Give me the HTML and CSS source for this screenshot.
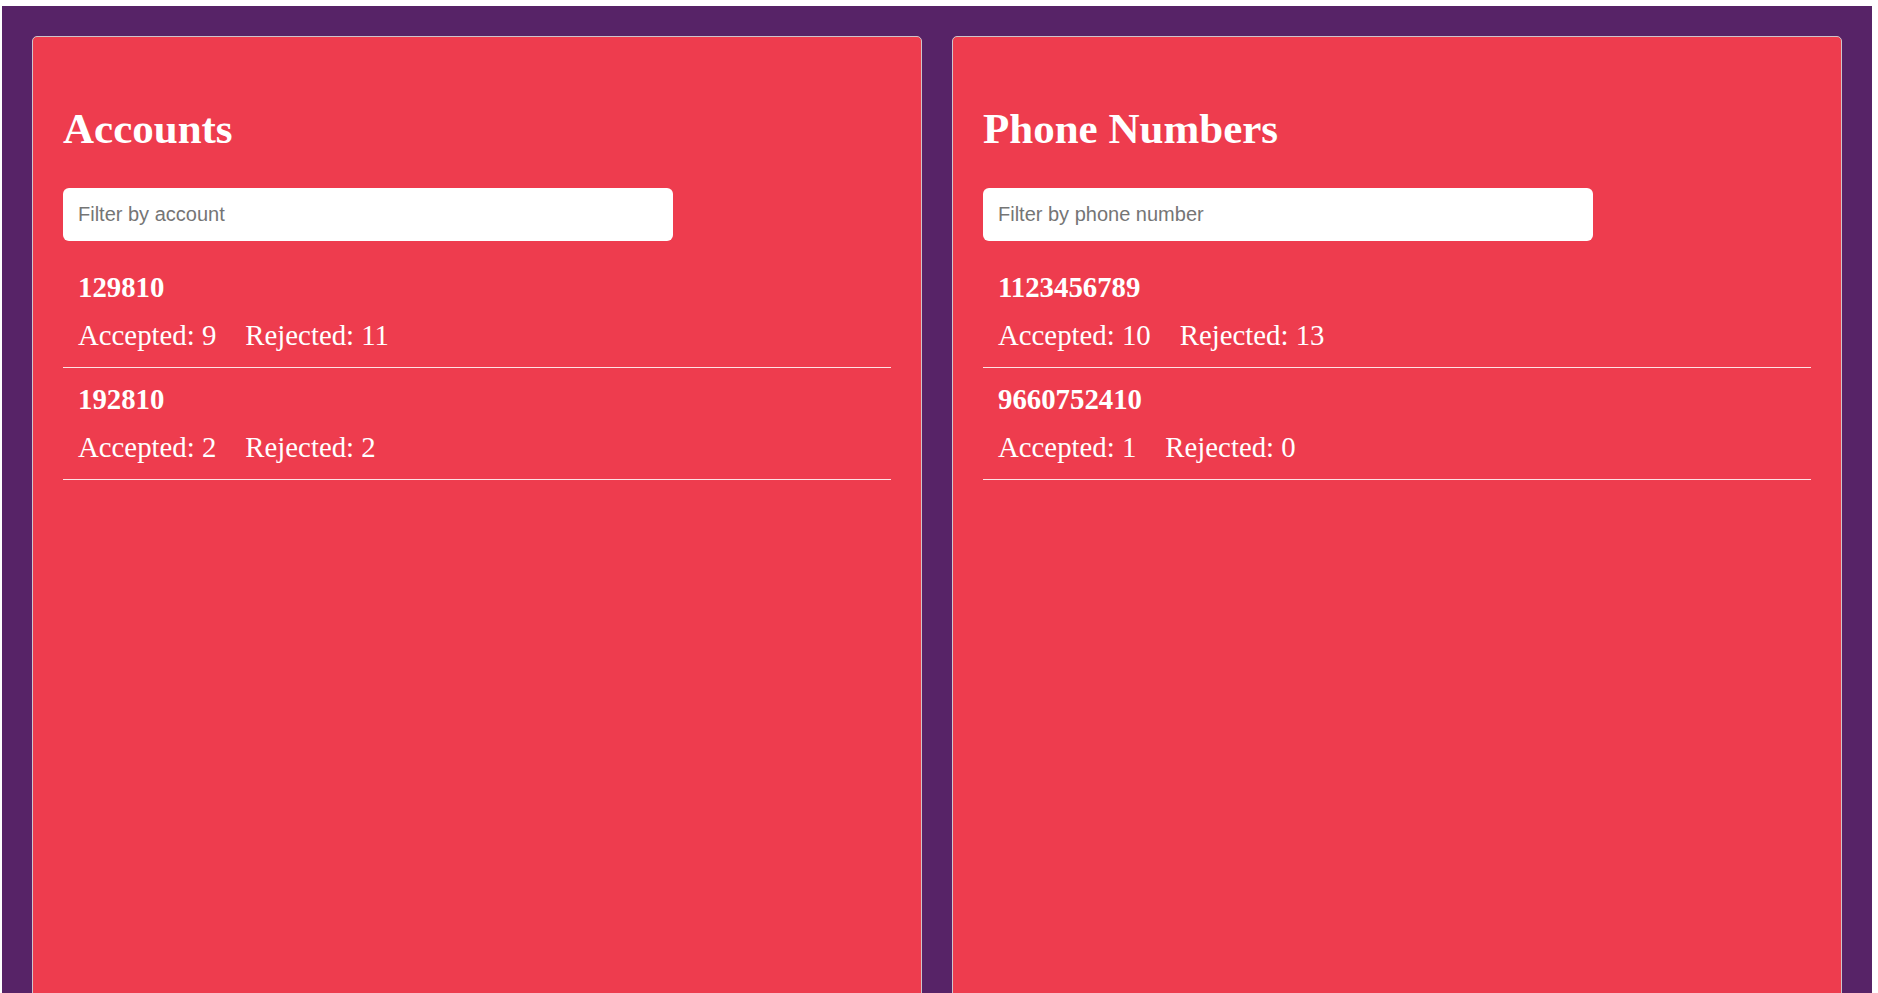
FILE: index.html
```html
<!DOCTYPE html>
<html lang="en">
<head>
<meta charset="utf-8">
<title>Accounts and Phone Numbers</title>
<link rel="stylesheet" href="styles.css">
</head>
<body>
<div class="page">
  <section class="card">
    <h1 class="card-title">Accounts</h1>
    <input class="filter" type="text" placeholder="Filter by account">
    <ul class="list">
      <li class="item">
        <div class="item-name">129810</div>
        <div class="item-stats"><span>Accepted: 9</span><span>Rejected: 11</span></div>
      </li>
      <li class="item">
        <div class="item-name">192810</div>
        <div class="item-stats"><span>Accepted: 2</span><span>Rejected: 2</span></div>
      </li>
    </ul>
  </section>
  <section class="card">
    <h1 class="card-title">Phone Numbers</h1>
    <input class="filter" type="text" placeholder="Filter by phone number">
    <ul class="list">
      <li class="item">
        <div class="item-name">1123456789</div>
        <div class="item-stats"><span>Accepted: 10</span><span>Rejected: 13</span></div>
      </li>
      <li class="item">
        <div class="item-name">9660752410</div>
        <div class="item-stats"><span>Accepted: 1</span><span>Rejected: 0</span></div>
      </li>
    </ul>
  </section>
</div>
</body>
</html>
```
FILE: styles.css
```css
html, body {
  margin: 0;
  padding: 0;
  background: #ffffff;
  overflow: hidden;
}

body {
  font-family: "Liberation Serif", "Times New Roman", serif;
  color: #ffffff;
}

.page {
  margin: 6px 6px 0 2px;
  padding: 30px;
  background: #572367;
  display: grid;
  grid-template-columns: 1fr 1fr;
  gap: 30px;
  min-height: 1100px;
  box-sizing: border-box;
}

.card {
  background: #ee3c4e;
  border: 1px solid #cfc3c9;
  border-radius: 5px;
  padding: 0 30px;
  min-height: 1000px;
  box-sizing: border-box;
}

.card-title {
  font-family: "Liberation Serif", "Times New Roman", serif;
  font-size: 43px;
  font-weight: bold;
  line-height: 49px;
  margin: 67px 0 35px;
  color: #ffffff;
}

.filter {
  display: block;
  width: 610px;
  height: 53px;
  box-sizing: border-box;
  border: none;
  border-radius: 6px;
  background: #ffffff;
  padding: 0 15px;
  font-family: "Liberation Sans", Arial, sans-serif;
  font-size: 20px;
  color: #333333;
  outline: none;
}

.filter::placeholder {
  color: #757575;
}

.list {
  list-style: none;
  margin: 15px 0 0;
  padding: 0;
}

.item {
  padding: 15px 15px 15px;
  border-bottom: 1px solid rgba(255, 255, 255, 0.85);
}

.item-name {
  font-size: 28.8px;
  font-weight: bold;
  line-height: 33px;
  margin-bottom: 15px;
}

.item-stats {
  display: flex;
  gap: 29px;
  font-size: 28.8px;
  line-height: 33px;
}
```
